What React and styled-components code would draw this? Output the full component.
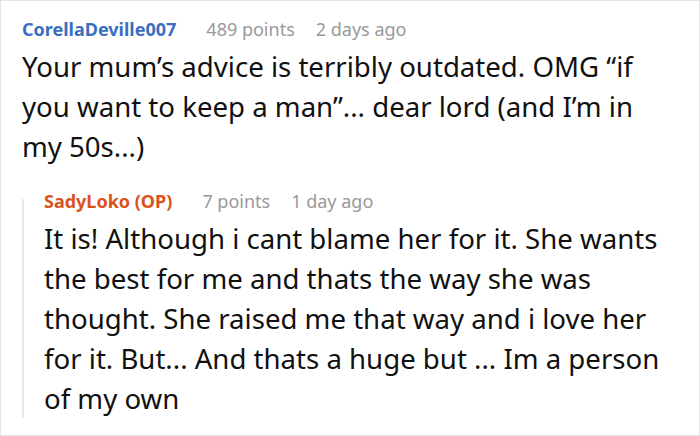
import React from "react";
import styled, { createGlobalStyle } from "styled-components";

const GlobalStyle = createGlobalStyle`
  html, body {
    margin: 0;
    padding: 0;
    background: #ffffff;
  }
  body {
    font-family: "Noto Sans", "Open Sans", sans-serif;
  }
`;

const Frame = styled.div`
  box-sizing: border-box;
  width: 700px;
  height: 436px;
  border: 1px solid #e3e3e3;
  padding: 11px 20px 0 21px;
  overflow: hidden;
`;

const Comment = styled.div`
  display: flex;
  flex-direction: column;
  flex: 1;
  min-width: 0;
`;

const Meta = styled.div`
  display: flex;
  align-items: baseline;
  gap: 21px;
  font-size: 18px;
  line-height: 34px;
  color: #999999;
  white-space: nowrap;
`;

const Author = styled.span`
  font-weight: 700;
  margin-right: 9px;
  color: ${(p) => (p.$op ? "#d9531c" : "#3a6ec0")};
`;

const Body = styled.p`
  margin: 0;
  font-size: 27.6px;
  line-height: 40px;
  color: #111111;
`;

const Reply = styled.div`
  display: flex;
  margin-top: 18px;
`;

const Rail = styled.div`
  flex: none;
  width: 2px;
  margin-top: 15px;
  margin-right: 20px;
  background: #e8e8e8;
`;

export default function App() {
  return (
    <>
      <GlobalStyle />
      <Frame>
        <Comment>
          <Meta>
            <Author>CorellaDeville007</Author>
            <span>489 points</span>
            <span>2 days ago</span>
          </Meta>
          <Body>
            Your mum’s advice is terribly outdated. OMG “if you want to keep a
            man”... dear lord (and I’m in my 50s...)
          </Body>
        </Comment>
        <Reply>
          <Rail />
          <Comment>
            <Meta>
              <Author $op>SadyLoko (OP)</Author>
              <span>7 points</span>
              <span>1 day ago</span>
            </Meta>
            <Body>
              It is! Although i cant blame her for it. She wants the best for me
              and thats the way she was thought. She raised me that way and i
              love her for it. But... And thats a huge but ... Im a person of my
              own
            </Body>
          </Comment>
        </Reply>
      </Frame>
    </>
  );
}
